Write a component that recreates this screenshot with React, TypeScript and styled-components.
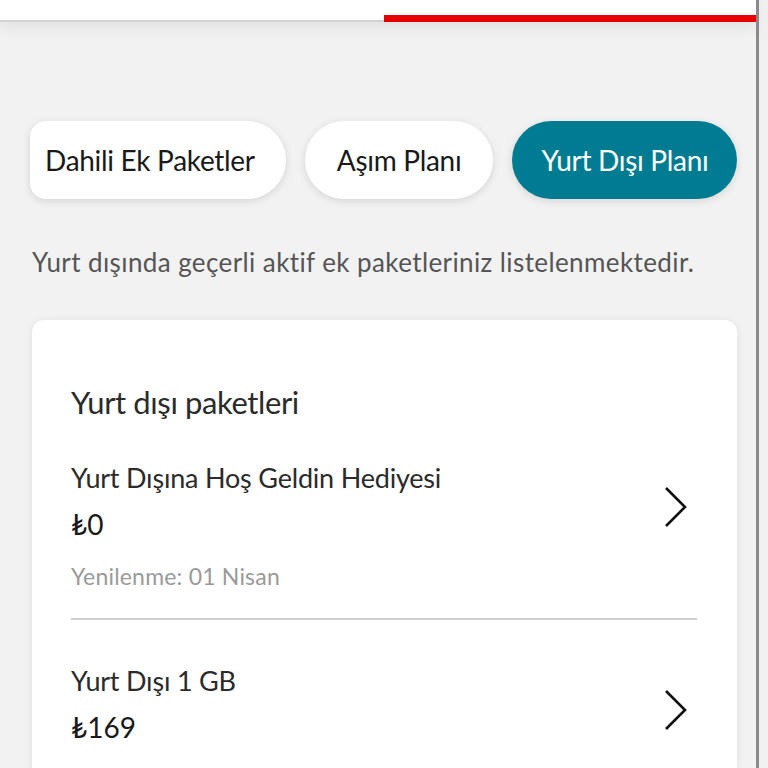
import styled, { createGlobalStyle } from "styled-components";

const GlobalStyle = createGlobalStyle`
  html, body {
    margin: 0;
    padding: 0;
    background: #f2f2f2;
    font-family: Lato, "Noto Sans", sans-serif;
    color: #333;
  }
`;

const Frame = styled.div`
  display: flex;
  width: 768px;
  height: 768px;
  overflow: hidden;
  background: #f0f0f0;
`;

const Screen = styled.div`
  width: 756px;
  flex-shrink: 0;
  background: #f2f2f2;
  border-right: 3px solid #8c8c8c;
  display: flex;
  flex-direction: column;
  & > * {
    flex-shrink: 0;
  }
`;

const Header = styled.div`
  height: 22px;
  background: #fff;
  display: flex;
  align-items: flex-end;
  box-shadow: 0 6px 16px rgba(0, 0, 0, 0.07);
  position: relative;
  z-index: 1;
`;

const HeaderHalf = styled.div<{ $active?: boolean }>`
  flex: ${(p) => (p.$active ? "1" : "0 0 384px")};
  height: ${(p) => (p.$active ? "7px" : "2px")};
  background: ${(p) => (p.$active ? "#e60000" : "#d2d2d2")};
`;

const Tabs = styled.div`
  display: flex;
  gap: 19px;
  margin: 99px 0 0 30px;
`;

const Pill = styled.div<{ $active?: boolean; $first?: boolean }>`
  flex-shrink: 0;
  height: 78px;
  display: flex;
  align-items: center;
  justify-content: center;
  box-sizing: border-box;
  padding: ${(p) => (p.$first ? "0 31px 0 15px" : p.$active ? "0 29px" : "0 32px")};
  border-radius: ${(p) => (p.$first ? "16px 39px 39px 16px" : "39px")};
  background: ${(p) => (p.$active ? "#007c92" : "#fff")};
  color: ${(p) => (p.$active ? "#fff" : "#1a1a1a")};
  box-shadow: 0 2px 8px rgba(0, 0, 0, 0.12);
  font-size: 28px;
  letter-spacing: -0.3px;
`;

const Intro = styled.p`
  margin: 47px 0 0 32px;
  font-size: 26px;
  line-height: 32px;
  color: #555;
  letter-spacing: 0.4px;
`;

const Card = styled.div`
  margin: 42px 0 0 32px;
  width: 705px;
  height: 460px;
  background: #fff;
  border-radius: 12px;
  box-shadow: 0 1px 8px rgba(0, 0, 0, 0.08);
  padding: 60px 40px 0 39px;
  box-sizing: border-box;
`;

const CardTitle = styled.h2`
  margin: 0 0 19px;
  font-size: 31px;
  line-height: 44px;
  font-weight: 400;
  color: #2b2b2b;
  letter-spacing: -0.4px;
`;

const Item = styled.div<{ $last?: boolean }>`
  display: flex;
  align-items: flex-start;
  padding: 18px 0 28px;
  border-bottom: ${(p) => (p.$last ? "none" : "2px solid #cfcfcf")};
  & + & {
    padding-top: 44px;
  }
`;

const ItemBody = styled.div`
  flex: 1;
  display: flex;
  flex-direction: column;
`;

const ItemName = styled.div`
  font-size: 27px;
  color: #2b2b2b;
  letter-spacing: -0.2px;
  line-height: 34px;
`;

const Price = styled.div`
  font-size: 28px;
  color: #1a1a1a;
  margin-top: 12px;
  line-height: 34px;
`;

const Renewal = styled.div`
  font-size: 23px;
  color: #9a9a9a;
  margin-top: 21px;
  line-height: 28px;
  letter-spacing: 0.2px;
`;

const ChevronBox = styled.svg`
  flex-shrink: 0;
  margin: 25px 9px 0 0;
`;

const Chevron = () => (
  <ChevronBox width="26" height="42" viewBox="0 0 26 42" fill="none">
    <path d="M4 2 L23 21 L4 40" stroke="#111" strokeWidth="2.6" />
  </ChevronBox>
);

const packages = [
  { name: "Yurt Dışına Hoş Geldin Hediyesi", price: "₺0", renewal: "Yenilenme: 01 Nisan" },
  { name: "Yurt Dışı 1 GB", price: "₺169", renewal: "Yenilenme: 01 Nisan" },
];

export default function App() {
  return (
    <Frame>
      <GlobalStyle />
      <Screen>
        <Header>
          <HeaderHalf />
          <HeaderHalf $active />
        </Header>
        <Tabs>
          <Pill $first>Dahili Ek Paketler</Pill>
          <Pill>Aşım Planı</Pill>
          <Pill $active>Yurt Dışı Planı</Pill>
        </Tabs>
        <Intro>Yurt dışında geçerli aktif ek paketleriniz listelenmektedir.</Intro>
        <Card>
          <CardTitle>Yurt dışı paketleri</CardTitle>
          {packages.map((p, i) => (
            <Item key={p.name} $last={i === packages.length - 1}>
              <ItemBody>
                <ItemName>{p.name}</ItemName>
                <Price>{p.price}</Price>
                <Renewal>{p.renewal}</Renewal>
              </ItemBody>
              <Chevron />
            </Item>
          ))}
        </Card>
      </Screen>
    </Frame>
  );
}
